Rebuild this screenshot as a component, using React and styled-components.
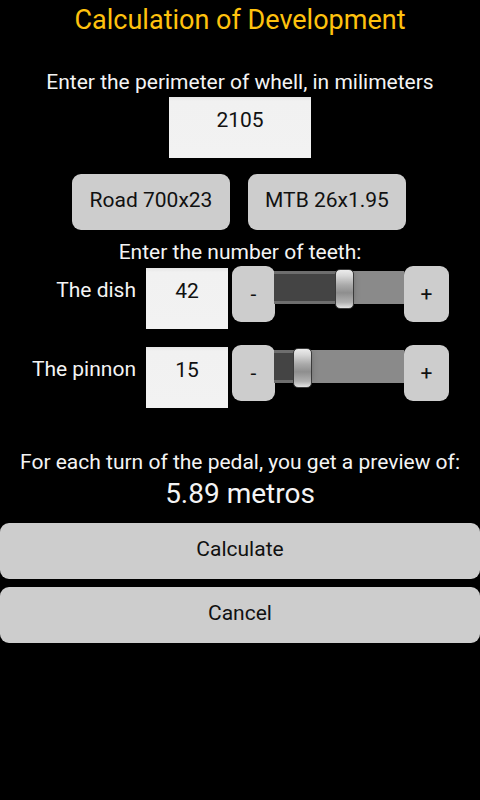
import React, { useState } from "react";
import styled, { createGlobalStyle } from "styled-components";

const GlobalStyle = createGlobalStyle`
  html, body {
    margin: 0;
    padding: 0;
    background: #000;
  }
  body {
    font-family: Roboto, "Liberation Sans", sans-serif;
    color: #fff;
  }
`;

const App = () => {
  const [perimeter] = useState(2105);
  const [dish, setDish] = useState(42);
  const [pinnon, setPinnon] = useState(15);

  const result = ((perimeter / 1000) * (dish / pinnon)).toFixed(2);

  return (
    <>
      <GlobalStyle />
      <Wrapper>
        <Title>Calculation of Development</Title>
        <Label top={35}>Enter the perimeter of whell, in milimeters</Label>
        <WheelInput>{perimeter}</WheelInput>
        <PresetRow>
          <Preset>Road 700x23</Preset>
          <Preset>MTB 26x1.95</Preset>
        </PresetRow>
        <Label top={10}>Enter the number of teeth:</Label>
        <TeethGrid>
          <RowLabel>The dish</RowLabel>
          <TeethInput>{dish}</TeethInput>
          <Stepper value={dish} min={20} max={60} onChange={setDish} />
          <RowLabel>The pinnon</RowLabel>
          <TeethInput>{pinnon}</TeethInput>
          <Stepper value={pinnon} min={11} max={34} onChange={setPinnon} />
        </TeethGrid>
        <Label top={42}>For each turn of the pedal, you get a preview of:</Label>
        <Result>{result} metros</Result>
        <WideButton top={13}>Calculate</WideButton>
        <WideButton top={8}>Cancel</WideButton>
      </Wrapper>
    </>
  );
};

const Stepper = ({ value, min, max, onChange }) => {
  const pct = (value - min) / (max - min);
  // thumb is 19px wide inside a 130px track
  const left = Math.round(pct * (130 - 19));
  return (
    <StepGroup>
      <StepButton onClick={() => onChange(Math.max(min, value - 1))}>-</StepButton>
      <Track>
        <Filled style={{ width: left + 10 }} />
        <Thumb style={{ left }} />
      </Track>
      <StepButton onClick={() => onChange(Math.min(max, value + 1))}>+</StepButton>
    </StepGroup>
  );
};

const Wrapper = styled.div`
  display: flex;
  flex-direction: column;
  align-items: center;
  width: 480px;
  height: 800px;
  background: #000;
`;

const Title = styled.div`
  margin-top: 5px;
  font-size: 27px;
  line-height: 30px;
  color: #ffc20e;
`;

const Label = styled.div`
  margin-top: ${(p) => p.top}px;
  font-size: 21px;
  line-height: 24px;
  color: #f4f4f4;
  text-align: center;
  white-space: nowrap;
`;

const WheelInput = styled.div`
  box-sizing: border-box;
  margin-top: 3px;
  width: 142px;
  height: 61px;
  padding-top: 11px;
  background: linear-gradient(#e4e4e4 0, #f1f1f1 4px, #f2f2f2 100%);
  color: #111;
  font-size: 21px;
  line-height: 24px;
  text-align: center;
`;

const PresetRow = styled.div`
  display: flex;
  gap: 18px;
  margin-top: 16px;
  margin-right: 2px;
`;

const Preset = styled.button`
  width: 158px;
  height: 56px;
  border: none;
  border-radius: 9px;
  background: #cdcdcd;
  color: #111;
  font-family: Roboto, "Liberation Sans", sans-serif;
  font-size: 21px;
  padding: 0 0 4px;
`;

const TeethGrid = styled.div`
  align-self: stretch;
  display: grid;
  grid-template-columns: 146px 86px 217px;
  row-gap: 16px;
  margin-top: 2px;
`;

const RowLabel = styled.div`
  padding-top: 12px;
  padding-right: 10px;
  font-size: 21px;
  line-height: 24px;
  text-align: right;
  color: #f4f4f4;
`;

const TeethInput = styled.div`
  box-sizing: border-box;
  margin-top: 2px;
  width: 82px;
  height: 61px;
  padding-top: 11px;
  background: linear-gradient(#e4e4e4 0, #f1f1f1 4px, #f2f2f2 100%);
  color: #111;
  font-size: 21px;
  line-height: 24px;
  text-align: center;
`;

const StepGroup = styled.div`
  display: flex;
  align-items: flex-start;
`;

const StepButton = styled.button`
  flex: none;
  width: 43px;
  height: 56px;
  border: none;
  border-radius: 9px;
  padding: 0;
  background: #cdcdcd;
  color: #111;
  font-family: Roboto, "Liberation Sans", sans-serif;
  font-size: 21px;
  &:last-child {
    width: 45px;
  }
`;

const Track = styled.div`
  position: relative;
  flex: none;
  width: 130px;
  height: 33px;
  margin-top: 5px;
  margin-left: -1px;
  background: #8a8a8a;
`;

const Filled = styled.div`
  height: 100%;
  box-sizing: border-box;
  background: #444;
  border-top: 3px solid #6e6e6e;
  border-bottom: 3px solid #6e6e6e;
  box-shadow: 8px 0 8px -2px rgba(0, 0, 0, 0.45);
`;

const Thumb = styled.div`
  position: absolute;
  top: -2px;
  width: 19px;
  height: 40px;
  box-sizing: border-box;
  border-radius: 5px;
  border: 1px solid #3a3a3a;
  background: linear-gradient(
    #ececec 0%,
    #d8d8d8 15%,
    #a9a9a9 40%,
    #8e8e8e 60%,
    #b0b0b0 85%,
    #e4e4e4 100%
  );
`;

const Result = styled.div`
  margin-top: 4px;
  font-size: 28px;
  line-height: 32px;
  color: #f4f4f4;
`;

const WideButton = styled.button`
  margin-top: ${(p) => p.top}px;
  width: 480px;
  height: 56px;
  border: none;
  border-radius: 9px;
  background: #cdcdcd;
  color: #111;
  font-family: Roboto, "Liberation Sans", sans-serif;
  font-size: 21px;
  padding: 0 0 4px;
`;

export default App;
